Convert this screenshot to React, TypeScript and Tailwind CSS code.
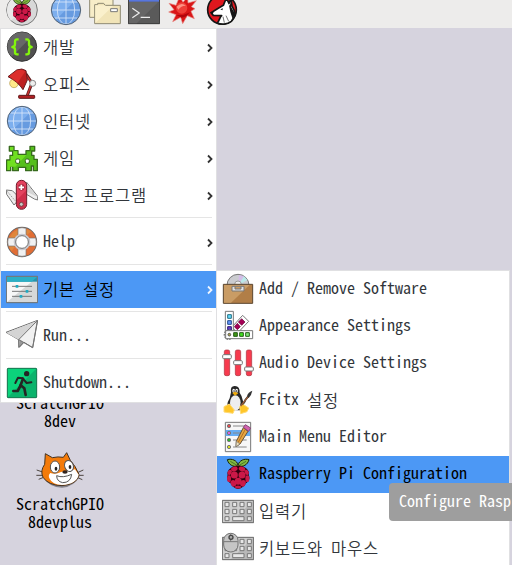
import React from "react";

type IconProps = { className?: string };

function Icon({ children, className = "size-8" }: { children: React.ReactNode; className?: string }) {
  return (
    <svg viewBox="0 0 96 96" className={`block shrink-0 ${className}`} strokeLinejoin="round">
      {children}
    </svg>
  );
}

const Globe = ({ className }: IconProps) => (
  <Icon className={className}>
    <circle cx="48" cy="48" r="44" fill="#679be0" />
    <path d="M17 78A43 43 0 0 1 78 17Z" fill="#7dafee" />
    <g fill="none" stroke="#dce9fa" strokeWidth="2.4">
      <path d="M48 5V91M5 48H91M13 24H83M13 72H83" />
      <ellipse cx="48" cy="48" rx="26" ry="43" />
    </g>
    <circle cx="48" cy="48" r="44" fill="none" stroke="#526274" strokeWidth="3" />
  </Icon>
);

const Berry = () => (
  <g>
    <path d="M47 25C34 27 20 21 16 5C30 1 45 7 48 21C52 7 67 1 81 5C77 21 63 27 50 25Z" fill="#82b841" stroke="#17230b" strokeWidth="3" />
    <path d="M25 10L45 22M72 10L52 22" stroke="#31591c" strokeWidth="2" />
    <path d="M31 27C38 21 59 21 66 27C79 33 83 43 80 51C86 61 80 71 72 76C67 87 56 92 48 93C40 92 30 87 26 76C17 71 12 61 17 51C14 42 20 33 31 27Z" fill="#32000f" />
    <g fill="#cb1847">
      <ellipse cx="37" cy="33" rx="10" ry="7" transform="rotate(-20 37 33)" />
      <ellipse cx="60" cy="33" rx="10" ry="7" transform="rotate(20 60 33)" />
      <ellipse cx="23" cy="43" rx="6" ry="8" transform="rotate(30 23 43)" />
      <ellipse cx="74" cy="43" rx="6" ry="8" transform="rotate(-30 74 43)" />
      <circle cx="37" cy="51" r="10.5" />
      <circle cx="60" cy="51" r="10.5" />
      <ellipse cx="21" cy="62" rx="6" ry="10" />
      <ellipse cx="76" cy="62" rx="6" ry="10" />
      <circle cx="48.5" cy="70" r="10.5" />
      <ellipse cx="34" cy="76" rx="8" ry="10" transform="rotate(-25 34 76)" />
      <ellipse cx="63" cy="76" rx="8" ry="10" transform="rotate(25 63 76)" />
      <ellipse cx="48" cy="87" rx="9" ry="4.5" />
    </g>
  </g>
);

const RaspberryIcon = () => <Icon><Berry /></Icon>;

const RaspberryButton = () => (
  <Icon>
    <circle cx="48" cy="48" r="46" fill="#d8d8d8" stroke="#777" strokeWidth="3" />
    <path d="M15 80A46 46 0 0 1 80 15Z" fill="#e9e9e9" />
    <g transform="translate(9 11) scale(.8)"><Berry /></g>
  </Icon>
);

const Folders = () => (
  <Icon>
    <path d="M2 0H72V70H2Z" fill="#f7edc8" stroke="#8f8a73" strokeWidth="3" />
    <path d="M17 32H26V28H44L48 34H94V89H17Z" fill="#f1e4b8" stroke="#8f8a73" strokeWidth="3" />
    <path d="M19 87V34H46L52 36H72Z" fill="#faf0cc" />
    <rect x="65" y="44" width="20" height="9" fill="#fff" stroke="#777" strokeWidth="3" />
  </Icon>
);

const Terminal = () => (
  <Icon>
    <rect x="1" y="-4" width="94" height="93" fill="#5a5a5a" stroke="#333" strokeWidth="3" />
    <rect x="3" y="0" width="90" height="23" fill="#5876dd" />
    <path d="M3 24H91L26 88H3Z" fill="#666" />
    <path d="M13 43L34 57L13 71M38 70H66" fill="none" stroke="#eee" strokeWidth="3.5" />
  </Icon>
);

const Splat = () => (
  <Icon>
    <path d="M38 7L48 25L62 9L63 27L88 20L73 38L84 44L72 52L82 74L61 65L47 89L41 70L17 83L27 62L5 54L21 47L6 28L27 34Z" fill="#d91617" stroke="#e88b83" strokeWidth="2" />
    <circle cx="44" cy="42" r="17" fill="#ee4038" />
    <path d="M29 38Q43 23 57 35Q43 34 34 47Z" fill="#ff9384" />
    <path d="M28 63L48 63L69 55L58 67L44 71Z" fill="#b0060b" />
  </Icon>
);

const Wolf = () => (
  <Icon>
    <circle cx="48" cy="47" r="43" fill="#df171e" stroke="#161616" strokeWidth="5" />
    <path d="M15 56L38 42L52 34L61 12L69 28L75 14L78 37C88 51 89 68 76 82C63 93 44 92 34 87C42 77 41 69 47 65L22 64Z" fill="#fff" stroke="#151515" strokeWidth="5" />
    <path d="M67 24L71 36L75 22L76 40L87 60L80 75L73 54Z" fill="#151515" />
    <path d="M43 46L51 43L49 49ZM13 55L23 53L20 61Z" fill="#111" />
    <path d="M60 65L68 82M51 68L55 86" stroke="#333" strokeWidth="2" />
  </Icon>
);

const Code = () => (
  <Icon>
    <circle cx="48" cy="47" r="44" fill="#505050" stroke="#333" strokeWidth="3" />
    <path d="M17 77A43 43 0 0 1 78 16Z" fill="#676767" />
    <path d="M38 25H33Q27 25 27 32V40Q27 47 19 48Q27 49 27 56V64Q27 70 33 70H38M58 25H63Q69 25 69 32V40Q69 47 77 48Q69 49 69 56V64Q69 70 63 70H58" fill="none" stroke="#83f50c" strokeWidth="7" />
  </Icon>
);

const Lamp = () => (
  <Icon>
    <circle cx="24" cy="46" r="13" fill="#ffe98a" stroke="#b4994d" strokeWidth="2" />
    <path d="M60 18L78 45L64 82" fill="none" stroke="#5e1b1d" strokeWidth="9" />
    <path d="M60 19L77 45L64 82" fill="none" stroke="#cf3432" strokeWidth="4" />
    <path d="M6 26L32 6Q49 -1 60 8L64 36L51 65Q35 40 6 26Z" fill="#bd2020" stroke="#681c1e" strokeWidth="3" />
    <path d="M9 25L34 7Q48 2 58 10L35 44Z" fill="#dc2e2c" />
    <circle cx="80" cy="46" r="9" fill="#eee" stroke="#888" strokeWidth="3" />
    <rect x="38" y="82" width="48" height="9" rx="2" fill="#b52023" stroke="#5d1718" strokeWidth="3" />
  </Icon>
);

const Alien = () => (
  <Icon>
    <path d="M10 13H24V26H36V37H60V26H72V13H86V27H77V40H84V52H94V86H82V72H76V86H59V76H37V86H20V72H14V86H2V54H12V40H20V27H10Z" fill="#55bf1b" stroke="#376b1d" strokeWidth="4" />
    <path d="M12 15H22V28H34V39H61L28 74H12V84H4V56H14V42H22V25H12Z" fill="#70df20" />
    <rect x="29" y="51" width="12" height="13" rx="4" fill="#fff" stroke="#386420" strokeWidth="3" />
    <rect x="58" y="51" width="12" height="13" rx="4" fill="#fff" stroke="#386420" strokeWidth="3" />
  </Icon>
);

const Knife = () => (
  <Icon>
    <path d="M1 33L19 35L32 48V69L24 78L2 46ZM62 10L95 52V63L85 60L60 45Z" fill="#efefef" stroke="#777" strokeWidth="3" />
    <path d="M2 35L28 66" stroke="#999" strokeWidth="3" strokeDasharray="4 3" />
    <path d="M62 12L93 53L62 38Z" fill="#d5d5d5" />
    <rect x="31" y="4" width="31" height="87" rx="15" fill="#cf2f4b" stroke="#701d2c" strokeWidth="3" />
    <path d="M33 62V19Q33 6 47 6Q59 6 60 20V35Z" fill="#e4435f" />
    <circle cx="46" cy="25" r="10" fill="#aa2940" />
    <path d="M46 17V33M38 25H54" stroke="#fff" strokeWidth="5" />
    <circle cx="46" cy="76" r="6" fill="#c9c9c9" stroke="#744" strokeWidth="3" />
  </Icon>
);

const Lifebuoy = () => (
  <Icon>
    <circle cx="48" cy="48" r="32" fill="none" stroke="#666" strokeWidth="27" />
    <circle cx="48" cy="48" r="32" fill="none" stroke="#e16e35" strokeWidth="22" />
    <path d="M16 76A43 43 0 0 1 76 16L63 27A26 26 0 0 0 27 62Z" fill="#df873c" />
    <path d="M36 7Q48 3 60 7V29Q48 25 36 29ZM36 67Q48 72 60 67V89Q48 93 36 89ZM7 36Q3 48 7 60H29Q25 48 29 36ZM67 36H89Q93 48 89 60H67Q71 48 67 36Z" fill="#f1f1f1" stroke="#777" strokeWidth="2" />
    <circle cx="48" cy="48" r="22" fill="none" stroke="#c7c8ce" strokeWidth="6" />
    <circle cx="48" cy="48" r="19" fill="white" stroke="#777" strokeWidth="3" />
  </Icon>
);

const Preferences = () => (
  <Icon>
    <rect x="1" y="10" width="94" height="79" fill="#d6d8d8" stroke="#676b6d" strokeWidth="3" />
    <path d="M3 87V26H77Z" fill="#f7f7f7" />
    <path d="M3 12H93V26H3Z" fill="#2792ac" />
    <path d="M3 12H93L77 26H3Z" fill="#2bafc5" />
    <path d="M18 40H78M18 55H78M18 70H78" stroke="#777" strokeWidth="3" />
    <path d="M29 40H37M59 55H67M41 70H49" stroke="#21aac1" strokeWidth="8" />
  </Icon>
);

const Plane = () => (
  <Icon>
    <path d="M0 37L95 1L80 83L54 67L40 82L38 59Z" fill="#f1f1f1" stroke="#666" strokeWidth="3" />
    <path d="M1 38L94 2L38 59Z" fill="#d4d4d4" />
    <path d="M40 58L53 66L41 80Z" fill="#999" />
    <path d="M38 59L94 2L80 83L38 59V82L53 67" fill="none" stroke="#777" strokeWidth="3" />
  </Icon>
);

const Exit = () => (
  <Icon>
    <rect x="4" y="4" width="88" height="88" rx="2" fill="#0bb36c" stroke="#12764d" strokeWidth="3" />
    <path d="M6 6H90L6 90Z" fill="#0bd37b" />
    <circle cx="62" cy="20" r="8" fill="#242424" />
    <path d="M28 48L36 32L50 34L62 48L76 46" fill="none" stroke="#242424" strokeWidth="6" strokeLinecap="round" />
    <path d="M51 35L43 57L35 72H22M43 54L55 64L59 84" fill="none" stroke="#242424" strokeWidth="8" strokeLinecap="round" />
  </Icon>
);

const Package = () => (
  <Icon>
    <circle cx="48" cy="37" r="33" fill="#cbccd0" stroke="#777" strokeWidth="3" />
    <path d="M48 37L51 6L66 10Z" fill="#d3bde8" />
    <path d="M48 37L66 10L76 21Z" fill="#bae9e9" />
    <circle cx="48" cy="34" r="10" fill="#eee" stroke="#999" strokeWidth="3" />
    <rect x="4" y="34" width="88" height="57" fill="#b17e47" stroke="#5b4630" strokeWidth="3" />
    <path d="M6 36H83L27 89H6Z" fill="#c99c65" />
    <path d="M30 40H66V54H30ZM39 41V48H57V41" fill="#e2e2e2" stroke="#777" strokeWidth="3" />
  </Icon>
);

const Palette = () => (
  <Icon>
    <path d="M31 50L62 16L80 34L45 71Z" fill="#fff" stroke="#777" strokeWidth="3" />
    <path d="M59 26L69 36L59 46L49 36ZM46 40L55 50L46 59L37 50Z" fill="#a30055" stroke="#603" strokeWidth="2" />
    <path d="M10 4H34V72H10Z" fill="#fff" stroke="#777" strokeWidth="3" />
    <path d="M17 14H28V25H17Z" fill="#63dcff" stroke="#267083" strokeWidth="3" />
    <path d="M17 32H28V43H17Z" fill="#6697fb" stroke="#234d91" strokeWidth="3" />
    <path d="M17 50H28V60H17Z" fill="#6342c9" stroke="#311a73" strokeWidth="3" />
    <circle cx="21" cy="74" r="14" fill="#ddd" stroke="#777" strokeWidth="4" strokeDasharray="5 3" />
    <rect x="11" y="62" width="81" height="24" fill="#fff" stroke="#777" strokeWidth="3" />
    <circle cx="22" cy="74" r="4" fill="#b3a84a" stroke="#555" strokeWidth="3" />
    <g stroke="#265c18" strokeWidth="3"><path d="M35 68H46V79H35Z" fill="#409915" /><path d="M53 68H64V79H53Z" fill="#43e622" /><path d="M71 68H82V79H71Z" fill="#80ee79" /></g>
  </Icon>
);

const Mixer = () => (
  <Icon>
    {[15, 48, 81].map((x, i) => (
      <g key={x}>
        <rect x={x - 8} y="9" width="16" height="77" rx="5" fill="#f73b4e" stroke="#a92f3b" strokeWidth="2" />
        <rect x={x - 13} y={[23, 41, 60][i]} width="26" height="12" rx="3" fill="#fff" stroke="#777" strokeWidth="3" />
      </g>
    ))}
  </Icon>
);

const Tux = () => (
  <Icon>
    <path d="M27 25Q24 5 39 6Q54 7 53 26Q68 46 61 79H20Q10 64 23 43Z" fill="#282828" />
    <ellipse cx="40" cy="57" rx="16" ry="23" fill="#eee" />
    <ellipse cx="35" cy="20" rx="4" ry="6" fill="#fff" /><ellipse cx="44" cy="20" rx="4" ry="6" fill="#fff" />
    <path d="M31 27L39 23L49 28L39 35Z" fill="#eda90a" />
    <circle cx="36" cy="21" r="2" /><circle cx="44" cy="21" r="2" />
    <path d="M6 68L22 60L37 78L33 88L6 84ZM53 68L62 60L80 72L75 83L56 89Z" fill="#ffc629" stroke="#ffda74" strokeWidth="3" />
    <path d="M56 61Q66 61 70 48L78 38" fill="none" stroke="#333" strokeWidth="6" />
    <path d="M56 66L80 36" stroke="#9a5b38" strokeWidth="4" />
    <path d="M75 37Q77 25 91 20Q88 35 80 42Z" fill="#333" />
  </Icon>
);

const MenuEditor = () => (
  <Icon>
    <path d="M10 4H86V92H10Z" fill="#f7f7f7" stroke="#777" strokeWidth="3" />
    <path d="M11 27H84V45H11Z" fill="#66adf3" />
    {[["#e24c50", 15], ["#d965df", 36], ["#29b729", 57], ["#d5da24", 78]].map(([color, y]) => (
      <g key={y}><circle cx="21" cy={y} r="5" fill={color as string} stroke="#777" strokeWidth="3" /><path d={`M33 ${y}H74`} stroke="#888" strokeWidth="3" /></g>
    ))}
    <path d="M64 20L78 31L54 69L42 77L43 61Z" fill="#e7a641" stroke="#645036" strokeWidth="3" />
    <path d="M70 25L48 65" stroke="#b27023" strokeWidth="3" />
    <path d="M43 61L54 69L42 77Z" fill="#eee1bd" stroke="#777" strokeWidth="2" />
    <path d="M64 19L70 11L86 21L80 31Z" fill="#d360ae" stroke="#864777" strokeWidth="3" />
  </Icon>
);

const KeyboardBody = () => (
  <g>
    <path d="M1 16H95V83H1Z" fill="#b8b8b8" stroke="#686868" strokeWidth="3" />
    <path d="M3 18H93L27 81H3Z" fill="#cecece" />
    <g fill="#e7e7e7" stroke="#777" strokeWidth="3">
      {[22, 43].map((y) => [9, 32, 54, 76].map((x) => <rect key={`${x}-${y}`} x={x} y={y} width="12" height="13" />))}
      <rect x="9" y="65" width="12" height="12" /><rect x="32" y="65" width="34" height="12" /><rect x="76" y="65" width="12" height="12" />
    </g>
  </g>
);
const Keyboard = () => <Icon><KeyboardBody /></Icon>;
const KeyboardMouse = () => (
  <Icon>
    <KeyboardBody />
    <rect x="5" y="4" width="43" height="56" rx="21" fill="#c5c5c5" stroke="#707070" strokeWidth="3" />
    <path d="M6 29H47M26 5V29" stroke="#777" strokeWidth="3" />
    <circle cx="27" cy="16" r="6" fill="#aaa" stroke="#444" strokeWidth="4" />
  </Icon>
);

const Cat = () => (
  <svg viewBox="0 0 144 108" className="block h-9 w-12" strokeLinejoin="round">
    <path d="M25 80Q40 105 78 107Q112 107 134 70L116 87Z" fill="#84828a" />
    <path d="M2 54L20 60M1 70L20 70M8 82L23 76M122 63L142 54M124 70H143M123 76L139 83" stroke="#4d4540" strokeWidth="3" />
    <path d="M28 5L49 17Q67 13 82 16L92 2L103 25Q119 42 129 68Q124 97 78 101Q37 100 21 76Q12 56 26 37Z" fill="#f47b0a" stroke="#453322" strokeWidth="3" />
    <path d="M43 63Q58 69 75 60L90 57L117 52L128 68Q122 96 78 99Q49 98 41 80Q35 71 43 63Z" fill="#fff" />
    <ellipse cx="57" cy="45" rx="14" ry="18" fill="#fff" stroke="#555" strokeWidth="3" />
    <ellipse cx="99" cy="42" rx="13" ry="17" fill="#fff" stroke="#555" strokeWidth="3" transform="rotate(-20 99 42)" />
    <ellipse cx="60" cy="50" rx="4" ry="6" fill="#222" /><ellipse cx="102" cy="45" rx="4" ry="6" fill="#222" />
    <ellipse cx="87" cy="60" rx="8" ry="5" fill="#32251f" />
    <path d="M62 71Q80 79 107 67Q104 92 80 92Q62 88 62 71Z" fill="#fff" stroke="#555" strokeWidth="3" />
  </svg>
);

const monoText = "font-['Noto_Sans_Mono_CJK_KR','DejaVu_Sans_Mono','Noto_Sans_CJK_KR',monospace] text-[16px] whitespace-pre";

// Hangul runs take a full 16px cell per syllable; Latin letters and spaces take half of that.
function Label({ text }: { text: string }) {
  return (
    <>
      {text.split(/([\uac00-\ud7a3]+)/).map((part, i) =>
        i % 2 === 1 ? (
          <span key={i} className="align-[-2px] font-['Noto_Sans_CJK_KR',sans-serif] text-[16.5px] leading-none font-[350] tracking-[0.82px]">{part}</span>
        ) : (
          part
        ),
      )}
    </>
  );
}

type Entry = { label: string; icon: React.ReactNode; arrow?: boolean; active?: boolean; dividerBefore?: boolean };

const mainEntries: Entry[] = [
  { label: "개발", icon: <Code />, arrow: true },
  { label: "오피스", icon: <Lamp />, arrow: true },
  { label: "인터넷", icon: <Globe />, arrow: true },
  { label: "게임", icon: <Alien />, arrow: true },
  { label: "보조 프로그램", icon: <Knife />, arrow: true },
  { label: "Help", icon: <Lifebuoy />, arrow: true, dividerBefore: true },
  { label: "기본 설정", icon: <Preferences />, arrow: true, active: true, dividerBefore: true },
  { label: "Run...", icon: <Plane />, dividerBefore: true },
  { label: "Shutdown...", icon: <Exit />, dividerBefore: true },
];

const subEntries: Entry[] = [
  { label: "Add / Remove Software", icon: <Package /> },
  { label: "Appearance Settings", icon: <Palette /> },
  { label: "Audio Device Settings", icon: <Mixer /> },
  { label: "Fcitx 설정", icon: <Tux /> },
  { label: "Main Menu Editor", icon: <MenuEditor /> },
  { label: "Raspberry Pi Configuration", icon: <RaspberryIcon />, active: true },
  { label: "입력기", icon: <Keyboard /> },
  { label: "키보드와 마우스", icon: <KeyboardMouse /> },
];

function MenuRow({ entry }: { entry: Entry }) {
  return (
    <>
      {entry.dividerBefore && <div className="h-[10px] pt-[3px] pr-1 pl-[5px]"><div className="h-px bg-[#e5e5e5]" /></div>}
      <div className={`flex h-[37px] pt-[2px] pr-[3px] pl-[5px] ${entry.active ? "bg-[#4c98f5] text-black" : "text-[#32363b]"}`}>
        {entry.icon}
        <span className={`${monoText} ml-[5px] grow leading-[28px]`}><Label text={entry.label} /></span>
        {entry.arrow && (
          <svg viewBox="0 0 6 10" className="mt-[12px] h-[10px] w-[6px]">
            <path d="M1 1.5L4.5 5L1 8.5" fill="none" stroke={entry.active ? "#eef5ff" : "#333"} strokeWidth="1.8" />
          </svg>
        )}
      </div>
    </>
  );
}

export default function App() {
  return (
    <div className="relative h-[565px] w-[512px] overflow-hidden bg-[#d6d3de]">
      <header className="flex h-7 items-start bg-[#edeceb] pl-1.5">
        <div className="-mt-1.5 flex gap-[7px]">
          <div className="mr-[5px]"><RaspberryButton /></div>
          <Globe />
          <Folders />
          <Terminal />
          <Splat />
          <Wolf />
        </div>
      </header>

      <div className="absolute top-[393px] left-0 w-[120px] text-center text-black">
        <div className={`${monoText} leading-[18px]`}>ScratchGPIO<br />8dev</div>
      </div>
      <div className="absolute top-[452px] left-0 flex w-[120px] flex-col items-center text-center text-black">
        <Cat />
        <div className={`${monoText} mt-[6px] leading-[18px]`}>ScratchGPIO<br />8devplus</div>
      </div>

      <nav className="absolute top-7 left-0 w-[217px] border border-[#e0e0e2] bg-white">
        {mainEntries.map((entry) => <MenuRow key={entry.label} entry={entry} />)}
      </nav>
      <nav className="absolute top-[270px] left-[216px] w-[294px] border border-[#e0e0e2] bg-white">
        {subEntries.map((entry) => <MenuRow key={entry.label} entry={entry} />)}
      </nav>
      <div className={`${monoText} absolute top-[483px] left-[389px] h-[38px] w-[240px] rounded-[4px] bg-[#9e9e9e] pl-[10px] leading-[35px] text-white`}>
        Configure Rasp
      </div>
    </div>
  );
}
